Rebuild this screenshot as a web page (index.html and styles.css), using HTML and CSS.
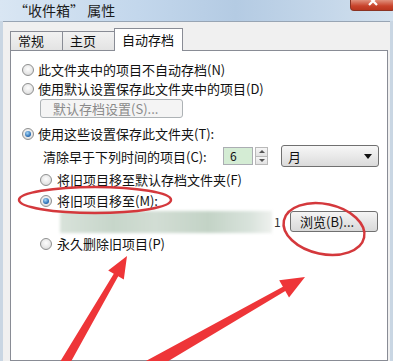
FILE: index.html
```html
<!DOCTYPE html>
<html lang="zh-CN">
<head>
    <meta charset="UTF-8">
    <title>收件箱 属性</title>
    <link rel="stylesheet" href="styles.css">
</head>
<body>
    <div class="window">
        <div class="titlebar">
            <span class="title">“收件箱” 属性</span>
            <div class="close">
                <svg width="12" height="8" viewBox="0 0 12 8"><path d="M2 -3 L10 5 M10 -3 L2 5" stroke="#fff" stroke-width="2.2"/></svg>
            </div>
        </div>
        <div class="client">
            <div class="tabs">
                <div class="tab">常规</div>
                <div class="tab">主页</div>
                <div class="tab active">自动存档</div>
            </div>
            <div class="panel">
                <div class="row lv1"><span class="radio"></span>此文件夹中的项目不自动存档(N)</div>
                <div class="row lv1"><span class="radio"></span>使用默认设置保存此文件夹中的项目(D)</div>
                <div class="btn disabled defbtn">默认存档设置(S)...</div>
                <div class="row lv1 r3"><span class="radio on"></span>使用这些设置保存此文件夹(T):</div>
                <div class="row clear">
                    <span class="label">清除早于下列时间的项目(C):</span>
                    <span class="num">6</span>
                    <span class="spin"><span class="up"></span><span class="down"></span></span>
                    <span class="select">月<span class="arrow"></span></span>
                </div>
                <div class="row lv2 r4"><span class="radio"></span>将旧项目移至默认存档文件夹(F)</div>
                <div class="row lv2 r5"><span class="radio on"></span>将旧项目移至(M):</div>
                <div class="row pathrow">
                    <span class="path"></span>
                    <span class="pathend">1</span>
                    <span class="btn browse">浏览(B)...</span>
                </div>
                <div class="row lv2 r6"><span class="radio"></span>永久删除旧项目(P)</div>
            </div>
        </div>
        <!-- 标注 -->
        <svg class="marks" width="393" height="361" viewBox="0 0 393 361">
            <ellipse cx="95" cy="200" rx="76" ry="13" fill="none" stroke="#d4383c" stroke-width="2.5"/>
            <ellipse cx="324" cy="229" rx="41" ry="25" fill="none" stroke="#d4383c" stroke-width="2.5" transform="rotate(12 324 229)"/>
            <polygon fill="#ee3538" points="127,256 123.8,279.5 118.2,276.3 63.3,375.5 54.7,370.5 113.8,273.7 108.2,270.5"/>
            <polygon fill="#ee3538" points="305,277 289,297.6 285.3,291.1 143,376.2 137,365.8 282.9,286.7 279.2,280.2"/>
        </svg>
    </div>
</body>
</html>
```

FILE: styles.css
```css
*{
    margin: 0;
    padding: 0;
    box-sizing: border-box;
}
body{
    width: 393px;
    height: 361px;
    overflow: hidden;
    background: #c9d6e3;
    font-family: "Noto Sans CJK SC", "Liberation Sans", sans-serif;
    font-size: 13px;
    color: #111;
}
.window{
    position: relative;
    width: 393px;
    height: 361px;
    display: flex;
    flex-direction: column;
}
.titlebar{
    height: 21px;
    flex: none;
    display: flex;
    justify-content: space-between;
    background: linear-gradient(to right, #d9e6f3 0%, #c3d7ec 35%, #b4cbe3 60%, #c6d8ea 85%, #d3e1ee 100%);
}
.title{
    padding-left: 14px;
    font-size: 14px;
    line-height: 20px;
    color: #1b1b1b;
}
.close{
    width: 45px;
    height: 11px;
    margin-right: -2px;
    border: 1px solid #8a3323;
    border-top: none;
    border-radius: 0 0 4px 4px;
    background: linear-gradient(#e0907c, #c8432b 60%, #b9361f);
    display: flex;
    justify-content: center;
    overflow: hidden;
}
.client{
    flex: 1;
    margin: 0 3px;
    padding: 0 2px 0 7px;
    border-top: 1px solid #98a5b4;
    background: #f0f0f0;
    display: flex;
    flex-direction: column;
}
.tabs{
    height: 28px;
    flex: none;
    display: flex;
    align-items: flex-end;
}
.tab{
    width: 53px;
    height: 19px;
    padding-left: 7px;
    border: 1px solid #898c95;
    border-bottom: none;
    margin-right: -1px;
    background: linear-gradient(#f2f2f2, #e3e3e3);
    font-size: 13px;
    line-height: 18px;
}
.tab.active{
    width: 69px;
    height: 23px;
    margin-bottom: -1px;
    padding-left: 7px;
    background: #fff;
    position: relative;
    z-index: 1;
    line-height: 21px;
}
.panel{
    flex: 1;
    background: #fff;
    border: 1px solid #898c95;
    padding-top: 9px;
    display: flex;
    flex-direction: column;
}
.row{
    display: flex;
    align-items: center;
    height: 19px;
    white-space: nowrap;
}
.lv1{
    padding-left: 11px;
}
.lv1 .radio{
    margin-right: 4px;
}
.lv2{
    padding-left: 29px;
}
.lv2 .radio{
    margin-right: 5px;
}
.radio{
    flex: none;
    width: 12px;
    height: 12px;
    border-radius: 50%;
    border: 1px solid #8e8f8f;
    background: radial-gradient(circle at 50% 40%, #fdfdfd 0, #e8e8e8 55%, #cdcdcd 100%);
    position: relative;
}
.radio.on::after{
    content: "";
    position: absolute;
    left: 2px;
    top: 2px;
    width: 6px;
    height: 6px;
    border-radius: 50%;
    background: radial-gradient(circle at 40% 35%, #a6d8f8, #2064ad 70%);
}
.btn{
    display: flex;
    align-items: center;
    border: 1px solid #707070;
    border-radius: 3px;
    background: linear-gradient(#f5f5f5, #e6e6e6 50%, #d9d9d9);
    white-space: nowrap;
}
.btn.disabled{
    border-color: #adb2b5;
    background: #f4f4f4;
    color: #8a8a8a;
}
.defbtn{
    width: 143px;
    height: 19px;
    margin: 1px 0 0 29px;
    padding-left: 12px;
}
.r3{
    margin-top: 6px;
}
.clear{
    height: 22px;
    margin-top: 2px;
    padding-left: 32px;
}
.label{
    width: 180px;
}
.num{
    width: 30px;
    height: 18px;
    border: 1px solid #abadb3;
    background: #d4ecd4;
    padding-left: 6px;
    font-size: 12px;
    line-height: 16px;
}
.spin{
    width: 13px;
    height: 18px;
    margin-left: 2px;
    display: flex;
    flex-direction: column;
}
.spin span{
    flex: 1;
    border: 1px solid #b9b9b9;
    background: linear-gradient(#f6f6f6, #e2e2e2);
    position: relative;
}
.spin .down{
    border-top: none;
}
.spin span::after{
    content: "";
    position: absolute;
    left: 3px;
    top: 2px;
    border-left: 3px solid transparent;
    border-right: 3px solid transparent;
}
.spin .up::after{
    border-bottom: 3px solid #555;
}
.spin .down::after{
    border-top: 3px solid #555;
}
.select{
    width: 98px;
    height: 22px;
    margin-left: 13px;
    padding-left: 6px;
    border: 1px solid #707070;
    border-radius: 3px;
    background: linear-gradient(#f7f7f7, #e9e9e9 50%, #dadada);
    display: flex;
    align-items: center;
    justify-content: space-between;
    padding-right: 6px;
}
.arrow{
    border-left: 4px solid transparent;
    border-right: 4px solid transparent;
    border-top: 5px solid #111;
}
.r4{
    margin-top: 3px;
}
.r5{
    margin-top: 2px;
}
.pathrow{
    height: 21px;
    margin-top: 1px;
    padding-left: 49px;
}
.path{
    width: 212px;
    height: 22px;
    background: linear-gradient(to right, #d8e2da 0%, #c7d6ca 25%, #d2ddd4 45%, #c3d3c6 70%, #d9e3dc 90%, #eef1ee 100%);
    filter: blur(1.5px);
}
.pathend{
    width: 18px;
    font-size: 12px;
    color: #333;
    padding-left: 2px;
}
.browse{
    width: 88px;
    height: 21px;
    padding-left: 9px;
}
.r6{
    margin-top: 2px;
}
.marks{
    position: absolute;
    left: 0;
    top: 0;
    pointer-events: none;
}
```
